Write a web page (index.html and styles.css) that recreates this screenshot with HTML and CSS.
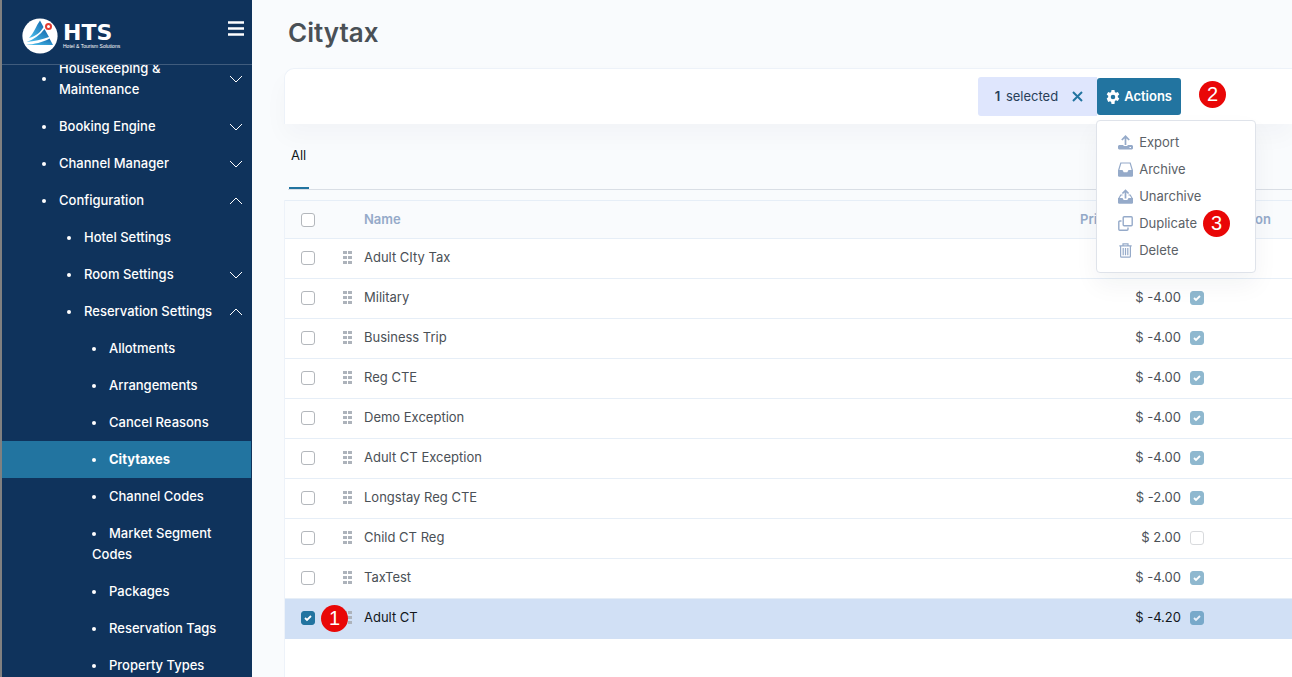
FILE: index.html
```
<!DOCTYPE html>
<html lang="en">
<head>
  <meta charset="UTF-8" />
  <meta name="viewport" content="width=device-width, initial-scale=1.0" />
  <title>Citytax</title>
  <link rel="stylesheet" href="styles.css">
</head>
<body>
  <!-- Shared icons -->
  <svg class="icon-defs" aria-hidden="true">
    <symbol id="chevron-down" viewBox="0 0 14 14"><path d="M1 4l6 6 6-6" fill="none" stroke="currentColor" stroke-width="1"/></symbol>
    <symbol id="chevron-up" viewBox="0 0 14 14"><path d="M1 10l6-6 6 6" fill="none" stroke="currentColor" stroke-width="1"/></symbol>
    <symbol id="grip" viewBox="0 0 9 13"><path d="M0 0h4v3H0zM5 0h4v3H5zM0 5h4v3H0zM5 5h4v3H5zM0 10h4v3H0zM5 10h4v3H5z" fill="currentColor"/></symbol>
  </svg>

  <div class="layout">
    <aside class="sidebar">
      <header class="brand">
        <a class="brand-link" href="#" aria-label="HTS">
          <svg class="brand-mark" width="36" height="36" viewBox="0 0 36 36">
            <defs>
              <linearGradient id="sail" x1="0" x2="1" y1="1" y2="0">
                <stop offset="0" stop-color="#4dc3f0"/>
                <stop offset="1" stop-color="#1267ab"/>
              </linearGradient>
            </defs>
            <circle cx="18" cy="18" r="17.6" fill="#fff"/>
            <path d="M7 20C12 15 14 8 18 2.500L21.500 9C19 14 14 18 7 20z" fill="url(#sail)"/>
            <path d="M4.500 24C12 21.500 18 17 22.500 11L27 19C20 21.500 12 23.500 4.500 24z" fill="url(#sail)"/>
            <path d="M4 27c8-1 17-2.500 23.500-6.500L31 27z" fill="url(#sail)"/>
            <circle cx="26.500" cy="8.500" r="2.500" fill="#fff" stroke="#e23b30" stroke-width="2"/>
          </svg>
          <span class="brand-text">
            <span class="brand-name">HTS</span>
            <span class="brand-tagline">Hotel &amp; Tourism Solutions</span>
          </span>
        </a>
        <button class="menu-toggle" type="button" aria-label="Toggle menu">
          <svg width="16" height="15" viewBox="0 0 16 15"><path d="M0 1.500h16M0 7.500h16M0 13.500h16" stroke="#fff" stroke-width="2.600"/></svg>
        </button>
      </header>

      <nav class="nav">
        <ul class="nav-list">
          <li><a class="nav-link has-sub" href="#"><span class="dot"></span><span class="label">Housekeeping &amp; Maintenance</span><svg class="chevron"><use href="#chevron-down"/></svg></a></li>
          <li><a class="nav-link has-sub" href="#"><span class="dot"></span><span class="label">Booking Engine</span><svg class="chevron"><use href="#chevron-down"/></svg></a></li>
          <li><a class="nav-link has-sub" href="#"><span class="dot"></span><span class="label">Channel Manager</span><svg class="chevron"><use href="#chevron-down"/></svg></a></li>
          <li>
            <a class="nav-link has-sub" href="#"><span class="dot"></span><span class="label">Configuration</span><svg class="chevron"><use href="#chevron-up"/></svg></a>
            <ul class="level-2">
              <li><a class="nav-link has-sub" href="#"><span class="dot"></span><span class="label">Hotel Settings</span></a></li>
              <li><a class="nav-link has-sub" href="#"><span class="dot"></span><span class="label">Room Settings</span><svg class="chevron"><use href="#chevron-down"/></svg></a></li>
              <li>
                <a class="nav-link has-sub" href="#"><span class="dot"></span><span class="label">Reservation Settings</span><svg class="chevron"><use href="#chevron-up"/></svg></a>
                <ul class="level-3">
                  <li><a class="nav-link" href="#"><span class="dot"></span>Allotments</a></li>
                  <li><a class="nav-link" href="#"><span class="dot"></span>Arrangements</a></li>
                  <li><a class="nav-link" href="#"><span class="dot"></span>Cancel Reasons</a></li>
                  <li><a class="nav-link active" href="#"><span class="dot"></span>Citytaxes</a></li>
                  <li><a class="nav-link" href="#"><span class="dot"></span>Channel Codes</a></li>
                  <li><a class="nav-link" href="#"><span class="dot"></span>Market Segment Codes</a></li>
                  <li><a class="nav-link" href="#"><span class="dot"></span>Packages</a></li>
                  <li><a class="nav-link" href="#"><span class="dot"></span>Reservation Tags</a></li>
                  <li><a class="nav-link" href="#"><span class="dot"></span>Property Types</a></li>
                </ul>
              </li>
            </ul>
          </li>
        </ul>
      </nav>
    </aside>

    <main class="content">
      <h1>Citytax</h1>

      <section class="toolbar">
        <div class="selection">
          <span><b>1</b> selected</span>
          <button class="clear" type="button" aria-label="Clear selection">
            <svg width="11" height="11" viewBox="0 0 11 11"><path d="M1 1l9 9M10 1l-9 9" stroke="currentColor" stroke-width="2"/></svg>
          </button>
        </div>
        <div class="dropdown">
          <button class="actions" type="button" aria-expanded="true">
            <svg width="14" height="14" viewBox="0 0 16 16"><path fill="currentColor" fill-rule="evenodd" d="M6.300 0h3.400l.4 2.200 1.300.8 2.100-.8 1.700 2.900-1.700 1.500v1.600l1.700 1.500-1.700 2.900-2.100-.8-1.300.8L9.700 16H6.300l-.4-2.400-1.300-.8-2.100.8L.8 9.700l1.700-1.500V6.600L.8 5.100l1.700-2.900 2.100.8 1.300-.8zM8 5.300a2.600 2.600 0 1 0 0 5.200 2.600 2.600 0 0 0 0-5.200z"/></svg>
            Actions
          </button>
          <div class="dropdown-menu">
            <button type="button" class="menu-item">
              <svg width="15" height="15" viewBox="0 0 15 15"><path d="M7.500 10V1.500M3.800 5l3.700-3.700L11.200 5" fill="none" stroke="currentColor" stroke-width="1.700"/><path fill="currentColor" fill-rule="evenodd" d="M1 10h4.500v1h4v-1H14l1 1v2.500l-1 1H1l-1-1V11zM11.500 12v1h1.500v-1z"/></svg>
              Export
            </button>
            <button type="button" class="menu-item">
              <svg width="15" height="15" viewBox="0 0 15 15"><path d="M.6 8.500L2.800 1h9.400l2.200 7.500" fill="none" stroke="currentColor" stroke-width="1.200"/><path d="M0 8h4.500l1.200 2.200h3.600L10.500 8H15v6l-.8.8H.8L0 14z" fill="currentColor"/></svg>
              Archive
            </button>
            <button type="button" class="menu-item">
              <svg width="15" height="15" viewBox="0 0 15 15"><path d="M7.500 9.500V1.500M4.400 4.500l3.100-3.100 3.100 3.100" fill="none" stroke="currentColor" stroke-width="1.700"/><path d="M4.500 6H2.800L.8 9.500M10.500 6h1.700l2 3.500" fill="none" stroke="currentColor" stroke-width="1.200"/><path d="M0 9h4.500l1.200 2h3.600l1.200-2H15v5l-.8.8H.8L0 14z" fill="currentColor"/></svg>
              Unarchive
            </button>
            <button type="button" class="menu-item">
              <svg width="15" height="15" viewBox="0 0 15 15"><g fill="none" stroke="currentColor" stroke-width="1.400"><rect x="5.200" y=".8" width="9" height="9" rx="1"/><path d="M3.500 5H1.800a1 1 0 0 0-1 1v7.200a1 1 0 0 0 1 1H9a1 1 0 0 0 1-1v-1.700"/></g></svg>
              Duplicate
              <span class="step">3</span>
            </button>
            <button type="button" class="menu-item">
              <svg width="15" height="15" viewBox="0 0 15 15"><g fill="none" stroke="currentColor" stroke-width="1.200"><path d="M1.300 2.800h12.400M5 2.500V.8h5v1.700M2.600 3v10.200a1 1 0 0 0 1 1h7.800a1 1 0 0 0 1-1V3M5.200 5v7.200M7.500 5v7.200M9.800 5v7.200"/></g></svg>
              Delete
            </button>
          </div>
        </div>
        <span class="step">2</span>
      </section>

      <div class="tabs"><a class="tab" href="#">All</a></div>

      <div class="table-card">
        <table>
          <thead>
            <tr>
              <th class="col-check"><input type="checkbox" aria-label="Select all"></th>
              <th class="col-grip"></th>
              <th class="col-name">Name</th>
              <th class="col-price">Price</th>
              <th class="col-exception">Exception</th>
            </tr>
          </thead>
          <tbody>
            <tr>
              <td class="col-check"><input type="checkbox" aria-label="Select Adult CIty Tax"></td>
              <td class="col-grip"><svg class="grip"><use href="#grip"/></svg></td>
              <td>Adult CIty Tax</td>
              <td class="amount"></td>
              <td></td>
            </tr>
            <tr>
              <td class="col-check"><input type="checkbox" aria-label="Select Military"></td>
              <td class="col-grip"><svg class="grip"><use href="#grip"/></svg></td>
              <td>Military</td>
              <td class="amount">$ -4.00</td>
              <td><input type="checkbox" aria-label="Exception" checked disabled></td>
            </tr>
            <tr>
              <td class="col-check"><input type="checkbox" aria-label="Select Business Trip"></td>
              <td class="col-grip"><svg class="grip"><use href="#grip"/></svg></td>
              <td>Business Trip</td>
              <td class="amount">$ -4.00</td>
              <td><input type="checkbox" aria-label="Exception" checked disabled></td>
            </tr>
            <tr>
              <td class="col-check"><input type="checkbox" aria-label="Select Reg CTE"></td>
              <td class="col-grip"><svg class="grip"><use href="#grip"/></svg></td>
              <td>Reg CTE</td>
              <td class="amount">$ -4.00</td>
              <td><input type="checkbox" aria-label="Exception" checked disabled></td>
            </tr>
            <tr>
              <td class="col-check"><input type="checkbox" aria-label="Select Demo Exception"></td>
              <td class="col-grip"><svg class="grip"><use href="#grip"/></svg></td>
              <td>Demo Exception</td>
              <td class="amount">$ -4.00</td>
              <td><input type="checkbox" aria-label="Exception" checked disabled></td>
            </tr>
            <tr>
              <td class="col-check"><input type="checkbox" aria-label="Select Adult CT Exception"></td>
              <td class="col-grip"><svg class="grip"><use href="#grip"/></svg></td>
              <td>Adult CT Exception</td>
              <td class="amount">$ -4.00</td>
              <td><input type="checkbox" aria-label="Exception" checked disabled></td>
            </tr>
            <tr>
              <td class="col-check"><input type="checkbox" aria-label="Select Longstay Reg CTE"></td>
              <td class="col-grip"><svg class="grip"><use href="#grip"/></svg></td>
              <td>Longstay Reg CTE</td>
              <td class="amount">$ -2.00</td>
              <td><input type="checkbox" aria-label="Exception" checked disabled></td>
            </tr>
            <tr>
              <td class="col-check"><input type="checkbox" aria-label="Select Child CT Reg"></td>
              <td class="col-grip"><svg class="grip"><use href="#grip"/></svg></td>
              <td>Child CT Reg</td>
              <td class="amount">$ 2.00</td>
              <td><input type="checkbox" aria-label="Exception" disabled></td>
            </tr>
            <tr>
              <td class="col-check"><input type="checkbox" aria-label="Select TaxTest"></td>
              <td class="col-grip"><svg class="grip"><use href="#grip"/></svg></td>
              <td>TaxTest</td>
              <td class="amount">$ -4.00</td>
              <td><input type="checkbox" aria-label="Exception" checked disabled></td>
            </tr>
            <tr class="selected">
              <td class="col-check"><input type="checkbox" aria-label="Select Adult CT" checked></td>
              <td class="col-grip"><span class="step">1</span><svg class="grip"><use href="#grip"/></svg></td>
              <td>Adult CT</td>
              <td class="amount">$ -4.20</td>
              <td><input type="checkbox" aria-label="Exception" checked disabled></td>
            </tr>
          </tbody>
        </table>
      </div>
    </main>
  </div>
</body>
</html>
```
FILE: styles.css
```
* {
  box-sizing: border-box;
}

body {
  margin: 0;
  font-family: Inter, "Liberation Sans", sans-serif;
  font-size: 13px;
  line-height: 21px;
  color: #4a5056;
  background-color: #f9fbfd;
}

button {
  font: inherit;
  border: 0;
  padding: 0;
  cursor: pointer;
}

a {
  color: inherit;
  text-decoration: none;
}

.icon-defs {
  position: absolute;
  width: 0;
  height: 0;
}

.layout {
  display: flex;
  height: 100vh;
  overflow: hidden;
}

/* Sidebar */
.sidebar {
  display: flex;
  flex-direction: column;
  flex: 0 0 252px;
  background-color: #0f335c;
  border-left: 2px solid #808080;
  color: #fff;
}

.brand {
  display: flex;
  flex-shrink: 0;
  align-items: flex-start;
  justify-content: space-between;
  height: 65px;
  padding: 18px 8px 0 20px;
  border-bottom: 1px solid #405c7d;
}

.brand-link {
  display: flex;
  align-items: center;
  gap: 5px;
}

.brand-text {
  display: flex;
  flex-direction: column;
}

.brand-name {
  font-family: "DejaVu Sans", sans-serif;
  font-size: 22px;
  font-weight: 700;
  line-height: 20px;
}

.brand-tagline {
  font-family: "Liberation Sans", sans-serif;
  font-size: 5px;
  font-weight: 400;
  line-height: 6px;
}

.menu-toggle {
  display: flex;
  padding-top: 3px;
  background: none;
}

.nav {
  flex: 1;
  overflow: hidden;
  font-weight: 500;
}

.nav ul {
  list-style: none;
  margin: 0;
  padding: 0;
}

/* the list is scrolled a little under the header */
.nav .nav-list {
  margin-top: -15px;
}

.nav-link {
  display: block;
  margin-right: 1px;
  padding: 8px 8px 8px 40px;
}

.has-sub {
  display: flex;
  align-items: center;
}

.has-sub .label {
  flex: 0 1 135px;
  margin-right: auto;
}

.level-2 .label {
  white-space: nowrap;
}

.level-2 .nav-link {
  padding-left: 65px;
}

.level-3 .nav-link {
  padding: 8px 30px 8px 90px;
}

.dot {
  display: inline-block;
  flex-shrink: 0;
  width: 4px;
  height: 4px;
  margin-right: 13px;
  border-radius: 50%;
  background-color: #fff;
  vertical-align: middle;
}

.chevron {
  width: 14px;
  height: 14px;
  flex-shrink: 0;
}

.active {
  background-color: #2274a0;
  font-weight: 700;
}

/* Content */
.content {
  display: flex;
  flex-direction: column;
  flex: 1;
  min-width: 0;
  padding-left: 32px;
}

h1 {
  margin: 17px 0 19px 4px;
  font-size: 26px;
  font-weight: 600;
  line-height: 32px;
}

.toolbar {
  display: flex;
  align-items: center;
  justify-content: flex-end;
  height: 56px;
  padding-right: 66px;
  background-color: #fff;
  border: 1px solid #edf2f9;
  border-width: 1px 0 0 1px;
  border-radius: 10px 0 0 0;
  box-shadow: 0 12px 24px rgba(18, 38, 63, 0.03);
}

.selection {
  display: flex;
  align-items: center;
  gap: 14px;
  height: 39px;
  padding: 0 14px 0 17px;
  background-color: #dfe6fd;
  border-radius: 3px 0 0 3px;
  color: #283e59;
}

.selection b {
  margin-right: 2px;
  font-weight: 600;
}

.clear {
  display: flex;
  background: none;
  color: #2274a0;
}

.dropdown {
  position: relative;
}

.actions {
  display: flex;
  align-items: center;
  gap: 4px;
  height: 37px;
  padding: 0 9px;
  background-color: #2274a0;
  border-radius: 3px;
  color: #fff;
  font-weight: 600;
}

.dropdown-menu {
  position: absolute;
  top: 42px;
  left: -1px;
  z-index: 2;
  width: 160px;
  padding: 8px 0;
  background-color: #fff;
  border: 1px solid #dfe3ea;
  border-radius: 4px;
  box-shadow: 0 12px 24px rgba(18, 38, 63, 0.05);
}

.menu-item {
  display: flex;
  align-items: center;
  gap: 6px;
  width: 100%;
  height: 27px;
  padding-left: 21px;
  background: none;
  color: #5b6167;
}

.menu-item svg {
  color: #95aac9;
}

/* Numbered red markers */
.step {
  display: inline-block;
  flex-shrink: 0;
  width: 27px;
  height: 27px;
  border-radius: 50%;
  background-color: #e90707;
  color: #fff;
  font-family: "Liberation Sans", sans-serif;
  font-size: 20px;
  font-weight: 400;
  line-height: 27px;
  text-align: center;
}

.toolbar > .step {
  margin: 0 0 5px 18px;
}

.tabs {
  height: 66px;
  margin-left: 4px;
  border-bottom: 1px solid #d9dee5;
}

.tab {
  display: inline-block;
  height: 65px;
  margin-left: 1px;
  padding: 21px 3px 0 2px;
  border-bottom: 2px solid #2274a0;
  color: #12161b;
}

/* Table */
.table-card {
  flex: 1;
  margin-top: 10px;
  background-color: #fff;
  border-left: 1px solid #edf2f9;
}

table {
  width: 100%;
  table-layout: fixed;
  border-collapse: separate;
  border-spacing: 0;
}

th,
td {
  height: 40px;
  padding: 0 0 2px;
  border-bottom: 1px solid #e6eef7;
  text-align: left;
}

th {
  height: 39px;
  padding-bottom: 0;
  background-color: #f9fbfd;
  border-top: 1px solid #e6eef7;
  color: #95aac9;
  font-weight: 600;
}

.col-check {
  width: 57px;
  padding-left: 16px;
}

.col-grip {
  width: 22px;
}

.col-price {
  width: 110px;
}

th.col-exception {
  width: 102px;
  padding-right: 21px;
  text-align: right;
}

.amount {
  padding-right: 9px;
  text-align: right;
}

td.col-grip {
  position: relative;
}

.grip {
  display: block;
  width: 9px;
  height: 13px;
  margin-left: 1px;
  color: #adb3bb;
}

.col-grip .step {
  position: absolute;
  top: 6px;
  left: -21px;
}

input[type="checkbox"] {
  display: block;
  appearance: none;
  width: 14px;
  height: 14px;
  margin: 0;
  border: 1px solid #b3b7bc;
  border-radius: 3px;
  background-color: #fff;
}

input[type="checkbox"]:checked {
  border-color: #2274a0;
  background: #2274a0 url("data:image/svg+xml,%3Csvg xmlns='http://www.w3.org/2000/svg' viewBox='0 0 12 12'%3E%3Cpath d='M3 6l2 2 4-4' fill='none' stroke='white' stroke-width='1.8'/%3E%3C/svg%3E") center / 12px no-repeat;
}

input[type="checkbox"]:disabled {
  opacity: 0.5;
}

.selected td {
  background-color: #d1e0f5;
  border-bottom-color: #d1e0f5;
  color: #12161b;
}
```
